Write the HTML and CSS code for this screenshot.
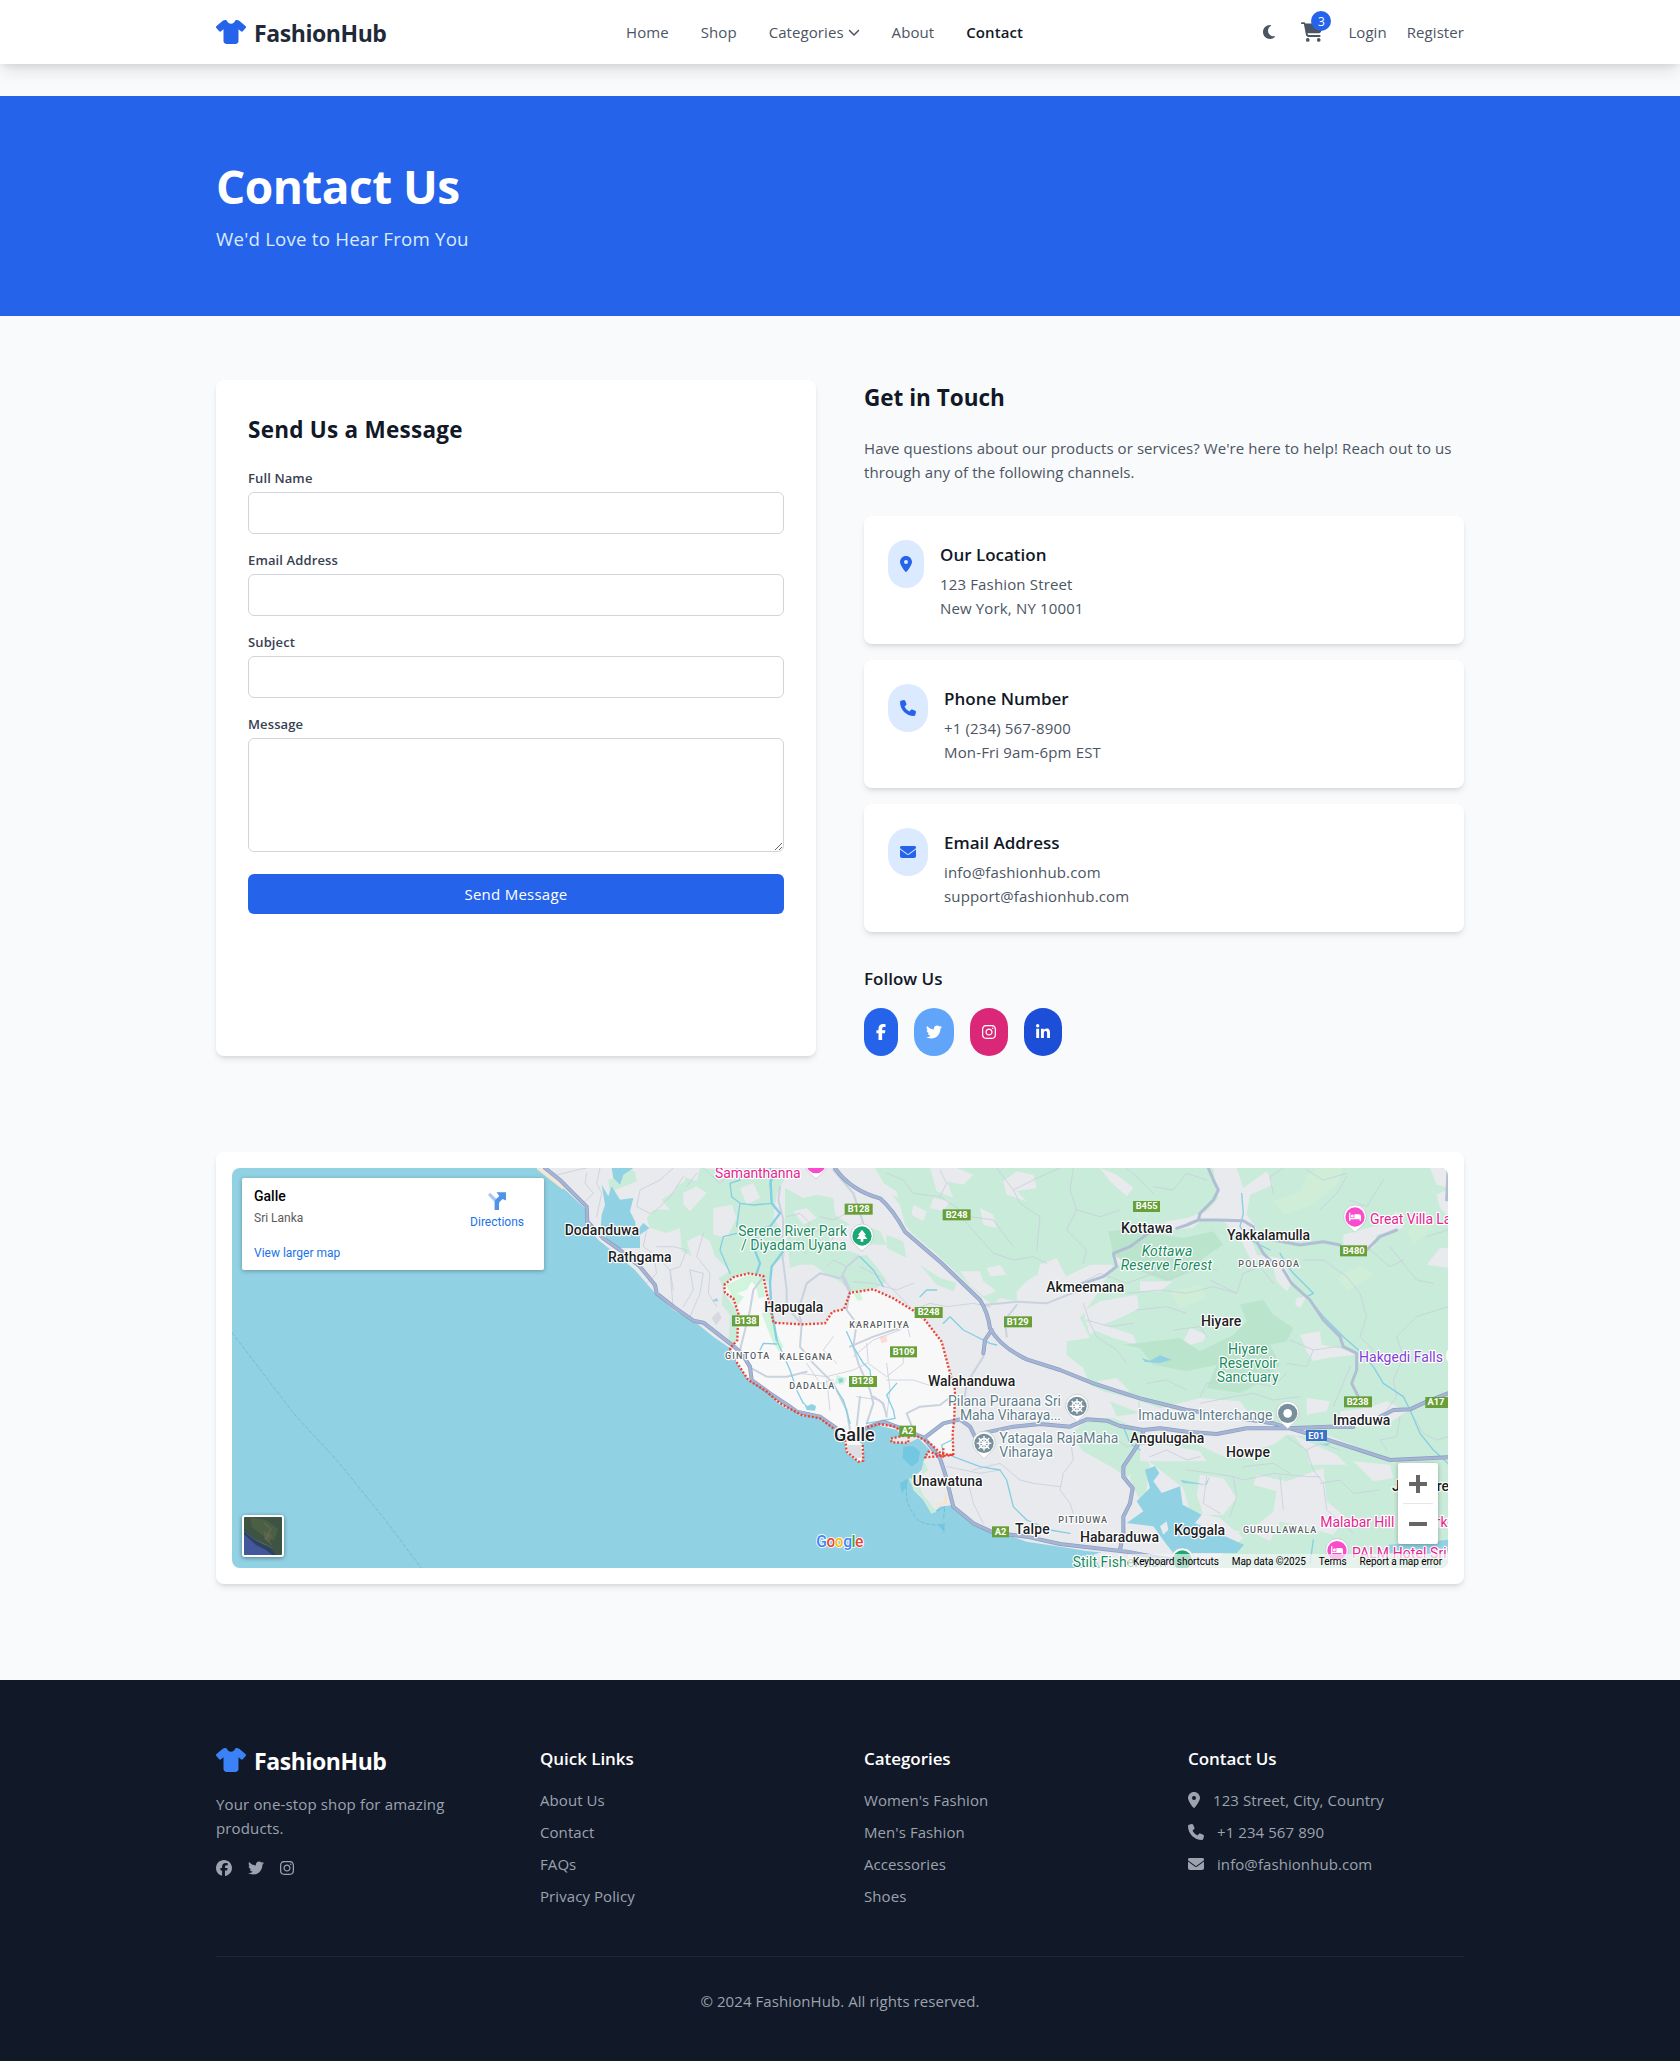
FILE: index.html
```html
<!DOCTYPE html>
<html lang="en">
<head>
<meta charset="utf-8">
<title>Contact Us - FashionHub</title>
<link rel="stylesheet" href="styles.css">
</head>
<body>
<svg class="sprite" aria-hidden="true">
  <symbol id="i-shirt" viewBox="0 0 640 512"><path d="M211.8 0c7.8 0 14.3 5.7 16.7 13.2C240.8 51.9 277.1 80 320 80s79.2-28.1 91.5-66.8C413.9 5.7 420.4 0 428.2 0h12.6c22.5 0 44.2 7.9 61.5 22.3L628.5 127.4c6.6 5.5 10.7 13.5 11.4 22.1s-2.1 17.1-7.8 23.6l-56 64c-11.4 13.1-31.2 14.6-44.6 3.5L480 197.7V448c0 35.3-28.7 64-64 64H224c-35.3 0-64-28.7-64-64V197.7l-51.5 42.9c-13.3 11.1-33.1 9.6-44.6-3.5l-56-64c-5.7-6.5-8.5-15-7.8-23.6s4.8-16.6 11.4-22.1L137.7 22.3C155 7.9 176.7 0 199.2 0h12.6z"/></symbol>
  <symbol id="i-moon" viewBox="0 0 384 512"><path d="M223.5 32C100 32 0 132.3 0 256S100 480 223.5 480c60.6 0 115.5-24.2 155.8-63.4c5-4.9 6.3-12.5 3.1-18.7s-10.1-9.7-17-8.5c-9.8 1.7-19.8 2.6-30.1 2.6c-96.9 0-175.5-78.8-175.5-176c0-65.8 36-123.1 89.3-153.3c6.1-3.5 9.2-10.5 7.7-17.3s-7.3-11.9-14.3-12.5c-6.3-.5-12.6-.8-19-.8z"/></symbol>
  <symbol id="i-cart" viewBox="0 0 576 512"><path d="M0 24C0 10.7 10.7 0 24 0H69.5c22 0 41.5 12.8 50.6 32h411c26.3 0 45.5 25 38.6 50.4l-41 152.3c-8.5 31.4-37 53.3-69.5 53.3H170.7l5.4 28.5c2.2 11.3 12.1 19.5 23.6 19.5H488c13.3 0 24 10.7 24 24s-10.7 24-24 24H199.7c-34.6 0-64.3-24.6-70.7-58.5L77.4 54.5c-.7-3.8-4-6.5-7.9-6.5H24C10.7 48 0 37.3 0 24zM128 464a48 48 0 1 1 96 0 48 48 0 1 1 -96 0zm336-48a48 48 0 1 1 0 96 48 48 0 1 1 0-96z"/></symbol>
  <symbol id="i-chevron" viewBox="0 0 512 512"><path d="M233.4 406.6c12.5 12.5 32.8 12.5 45.3 0l192-192c12.5-12.5 12.5-32.8 0-45.3s-32.8-12.5-45.3 0L256 338.7 86.6 169.4c-12.5-12.5-32.8-12.5-45.3 0s-12.5 32.8 0 45.3l192 192z"/></symbol>
  <symbol id="i-pin" viewBox="0 0 384 512"><path d="M215.7 499.2C267 435 384 279.4 384 192C384 86 298 0 192 0S0 86 0 192c0 87.4 117 243 168.3 307.2c12.3 15.3 35.1 15.3 47.4 0zM192 128a64 64 0 1 1 0 128 64 64 0 1 1 0-128z"/></symbol>
  <symbol id="i-phone" viewBox="0 0 512 512"><path d="M164.9 24.6c-7.7-18.6-28-28.5-47.4-23.2l-88 24C12.1 30.2 0 46 0 64C0 311.4 200.6 512 448 512c18 0 33.8-12.1 38.6-29.5l24-88c5.3-19.4-4.6-39.7-23.2-47.4l-96-40c-16.3-6.8-35.2-2.1-46.3 11.6L304.7 368C234.3 334.7 177.3 277.7 144 207.3L193.3 167c13.7-11.2 18.4-30 11.6-46.3l-40-96z"/></symbol>
  <symbol id="i-mail" viewBox="0 0 512 512"><path d="M48 64C21.5 64 0 85.5 0 112c0 15.1 7.1 29.3 19.2 38.4L236.8 313.6c11.4 8.5 27 8.5 38.4 0L492.8 150.4c12.1-9.1 19.2-23.3 19.2-38.4c0-26.5-21.5-48-48-48H48zM0 176V384c0 35.3 28.7 64 64 64H448c35.3 0 64-28.7 64-64V176L294.4 339.2c-22.8 17.1-54 17.1-76.8 0L0 176z"/></symbol>
  <symbol id="i-facebook-f" viewBox="0 0 320 512"><path d="M80 299.3V512H196V299.3h86.5l18-97.8H196V166.9c0-51.7 20.3-71.5 72.7-71.5c16.3 0 29.4 .4 37 1.2V7.9C291.4 4 256.4 0 236.2 0C129.3 0 80 50.5 80 159.4v42.1H14v97.8H80z"/></symbol>
  <symbol id="i-twitter" viewBox="0 0 512 512"><path d="M459.37 151.716c.325 4.548.325 9.097.325 13.645 0 138.72-105.583 298.558-298.558 298.558-59.452 0-114.68-17.219-161.137-47.106 8.447.974 16.568 1.299 25.34 1.299 49.055 0 94.213-16.568 130.274-44.832-46.132-.975-84.792-31.188-98.112-72.772 6.498.974 12.995 1.624 19.818 1.624 9.421 0 18.843-1.3 27.614-3.573-48.081-9.747-84.143-51.98-84.143-102.985v-1.299c13.969 7.797 30.214 12.67 47.431 13.319-28.264-18.843-46.781-51.005-46.781-87.391 0-19.492 5.197-37.36 14.294-52.954 51.655 63.675 129.3 105.258 216.365 109.807-1.624-7.797-2.599-15.918-2.599-24.04 0-57.828 46.782-104.934 104.934-104.934 30.213 0 57.502 12.67 76.67 33.137 23.715-4.548 46.456-13.32 66.599-25.34-7.798 24.366-24.366 44.833-46.132 57.827 21.117-2.273 41.584-8.122 60.426-16.243-14.292 20.791-32.161 39.308-52.628 54.253z"/></symbol>
  <symbol id="i-instagram" viewBox="0 0 448 512"><path d="M224.1 141c-63.6 0-114.9 51.3-114.9 114.9s51.3 114.9 114.9 114.9S339 319.5 339 255.9 287.7 141 224.1 141zm0 189.6c-41.1 0-74.7-33.5-74.7-74.7s33.5-74.7 74.7-74.7 74.7 33.5 74.7 74.7-33.6 74.7-74.7 74.7zm146.4-194.3c0 14.9-12 26.8-26.8 26.8-14.9 0-26.8-12-26.8-26.8s12-26.8 26.8-26.8 26.8 12 26.8 26.8zm76.1 27.2c-1.7-35.9-9.9-67.7-36.2-93.9-26.2-26.2-58-34.4-93.9-36.2-37-2.1-147.9-2.1-184.9 0-35.8 1.7-67.6 9.9-93.9 36.1s-34.4 58-36.2 93.9c-2.1 37-2.1 147.9 0 184.9 1.7 35.9 9.9 67.7 36.2 93.9s58 34.4 93.9 36.2c37 2.1 147.9 2.1 184.9 0 35.9-1.7 67.7-9.9 93.9-36.2 26.2-26.2 34.4-58 36.2-93.9 2.1-37 2.1-147.8 0-184.8zM398.8 388c-7.8 19.6-22.9 34.7-42.6 42.6-29.5 11.7-99.5 9-132.1 9s-102.7 2.6-132.1-9c-19.6-7.8-34.7-22.9-42.6-42.6-11.7-29.5-9-99.5-9-132.1s-2.6-102.7 9-132.1c7.8-19.6 22.9-34.7 42.6-42.6 29.5-11.7 99.5-9 132.1-9s102.7-2.6 132.1 9c19.6 7.8 34.7 22.9 42.6 42.6 11.7 29.5 9 99.5 9 132.1s2.7 102.7-9 132.1z"/></symbol>
  <symbol id="i-linkedin" viewBox="0 0 448 512"><path d="M100.28 448H7.4V148.9h92.88zM53.79 108.1C24.09 108.1 0 83.5 0 53.8a53.79 53.79 0 0 1 107.58 0c0 29.7-24.1 54.3-53.79 54.3zM447.9 448h-92.68V302.4c0-34.7-.7-79.2-48.29-79.2-48.29 0-55.69 37.7-55.69 76.7V448h-92.78V148.9h89.08v40.8h1.3c12.4-23.5 42.69-48.3 87.88-48.3 94 0 111.28 61.9 111.28 142.3V448z"/></symbol>
  <symbol id="i-facebook" viewBox="0 0 512 512"><path d="M512 256C512 114.6 397.4 0 256 0S0 114.6 0 256C0 376 82.7 476.8 194.2 504.5V334.2H141.4V256h52.8V222.3c0-87.1 39.4-127.5 125-127.5c16.2 0 44.2 3.2 55.7 6.4V172c-6-.6-16.5-1-29.6-1c-42 0-58.2 15.9-58.2 57.2V256h83.6l-14.4 78.2H287V510.1C413.8 494.8 512 386.9 512 256h0z"/></symbol>
</svg>

<nav class="navbar">
  <div class="container navbar-inner">
    <a class="logo" href="#"><svg class="logo-icon"><use href="#i-shirt"/></svg><span class="logo-text">FashionHub</span></a>
    <div class="nav-links">
      <a href="#">Home</a>
      <a href="#">Shop</a>
      <a class="nav-drop" href="#">Categories<svg class="chevron"><use href="#i-chevron"/></svg></a>
      <a href="#">About</a>
      <a class="active" href="#">Contact</a>
    </div>
    <div class="nav-actions">
      <svg class="moon"><use href="#i-moon"/></svg>
      <a class="cart" href="#"><svg class="cart-icon"><use href="#i-cart"/></svg><span class="badge">3</span></a>
      <a class="login" href="#">Login</a>
      <a class="register" href="#">Register</a>
    </div>
  </div>
</nav>

<header class="banner">
  <div class="container">
    <h1>Contact Us</h1>
    <p>We'd Love to Hear From You</p>
  </div>
</header>

<main class="container contact-grid">
  <section class="card form-card">
    <h2>Send Us a Message</h2>
    <form>
      <div class="field"><label for="name">Full Name</label><input id="name" type="text"></div>
      <div class="field"><label for="email">Email Address</label><input id="email" type="email"></div>
      <div class="field"><label for="subject">Subject</label><input id="subject" type="text"></div>
      <div class="field field-message"><label for="message">Message</label><textarea id="message"></textarea></div>
      <button type="button">Send Message</button>
    </form>
  </section>

  <section class="touch">
    <h2>Get in Touch</h2>
    <p class="intro">Have questions about our products or services? We're here to help! Reach out to us<br>through any of the following channels.</p>
    <div class="info-list">
      <div class="card info">
        <span class="info-icon"><svg class="w12"><use href="#i-pin"/></svg></span>
        <div><h3>Our Location</h3><p>123 Fashion Street</p><p>New York, NY 10001</p></div>
      </div>
      <div class="card info">
        <span class="info-icon"><svg class="w16"><use href="#i-phone"/></svg></span>
        <div><h3>Phone Number</h3><p>+1 (234) 567-8900</p><p>Mon-Fri 9am-6pm EST</p></div>
      </div>
      <div class="card info">
        <span class="info-icon"><svg class="w16"><use href="#i-mail"/></svg></span>
        <div><h3>Email Address</h3><p>info@fashionhub.com</p><p>support@fashionhub.com</p></div>
      </div>
    </div>
    <h3 class="follow">Follow Us</h3>
    <div class="socials">
      <a class="s-fb" href="#"><svg class="w10"><use href="#i-facebook-f"/></svg></a>
      <a class="s-tw" href="#"><svg class="w16"><use href="#i-twitter"/></svg></a>
      <a class="s-ig" href="#"><svg class="w14"><use href="#i-instagram"/></svg></a>
      <a class="s-li" href="#"><svg class="w14"><use href="#i-linkedin"/></svg></a>
    </div>
  </section>
</main>

<section class="container map-section">
  <div class="card map-card">
    <div class="map">
      <svg class="map-canvas" viewBox="-1164 54 3648 1200" preserveAspectRatio="none">
        <rect class="water" x="-1164" y="54" width="3648" height="1200"/>
        <!-- land -->
        <path class="land" d="M-250 54L-175 110L-105 175L-100 225L-65 270L-15 310L45 360L105 430L160 480L230 520L280 560L330 595L350 640L385 690L440 725L480 765L540 795L590 800L640 835L672 870L680 910L715 935L732 910L728 885L705 870L730 838L770 825L830 840L850 858L810 866L815 877L865 880L895 865L930 900L915 920L905 960L875 985L880 1020L910 1050L935 1092L960 1070L1000 1065L1040 1100L1095 1140L1160 1155L1220 1175L1320 1190L1400 1203L1520 1215L1600 1254H2484V54Z"/>

        <!-- west: lagoon side -->
        <g transform="translate(-240 54)">
          <path class="green" d="M250 0L285 10L290 40L240 60L210 75L205 35L240 25ZM415 0L420 30L405 70L365 95L390 125L340 125L320 150L330 180L380 195L420 180L425 250L455 265L440 220L480 200L510 220L525 265L570 310L535 330L545 350L555 380L595 435L600 470L590 520L565 530L570 440L545 410L550 350L600 320L665 320L690 350L700 290L735 265L720 180L700 150L710 80L740 20L720 0H640L560 10L480 0L470 40L440 30ZM735 60L790 90L830 80L880 90L885 140L930 170L860 190L880 250L830 240L760 200L735 170ZM740 200L830 230L900 240L960 260L990 300V365L930 370L900 340L860 320L820 290L780 290L750 300Z"/>
          <path class="land" d="M520 120L575 110L590 150L560 210L520 200ZM430 75L470 55L500 75L450 130L430 110ZM390 0H440L435 40L410 55L390 30ZM600 60L640 45L660 90L620 110ZM760 130L800 120L830 150L790 170Z"/>
          <path class="water" d="M215 0H280L250 20L240 50L220 30ZM185 50L205 85L215 55L240 95L280 90L270 130L285 160L290 190L310 165L328 180L300 200L300 240L230 240L200 215L190 190L180 210L185 140L195 110ZM515 400L530 390L535 400Z"/>
          <path class="building" d="M515 450L535 430L545 450L528 472Z"/>
        </g>

        <!-- centre: highway corridor -->
        <g transform="translate(690 54)">
          <path class="green" d="M0 270L50 260L90 310L110 340L80 360L0 370ZM110 200L160 220L170 270L110 240ZM40 170L90 190L110 230L60 230ZM210 290L270 330L320 345L310 370L260 350Z"/>
          <path class="green" d="M75 0L110 60L150 110L165 170L185 195L250 250L330 325L400 390L430 410L450 390L500 400L500 370L530 340L560 320L640 330L720 290L790 290L740 380L690 450L720 510L650 520L650 560L700 600L720 650L760 670L840 690L990 720V0Z"/>
          <path class="land" d="M460 40L500 10L550 20L560 60L500 70L530 100L470 80ZM240 0H320L370 20L340 50L290 40L310 90L260 70ZM750 0L800 20L850 60L830 85L780 40ZM860 130L920 150L930 200L870 180ZM330 310L390 310L400 340L440 370L400 385L360 350ZM250 90L300 100L280 130L240 120ZM390 120L430 140L440 180L400 170ZM20 0L70 0L75 30L140 70L145 90L90 60ZM410 300L450 290L470 320L420 325ZM570 290L620 270L650 330L560 330ZM190 110L230 130L220 160L185 140ZM700 450L760 470L850 500L860 530L790 510L740 490ZM740 640L800 630L840 670L780 660Z"/>
          <path class="land" d="M700 430L750 400L860 380L870 420L810 450L760 470L720 500ZM790 240L840 200L880 160L930 180L850 240L800 300Z"/>
          <path class="green" d="M700 765L740 750L790 750L880 790L880 880L830 930L790 900L700 850L660 800ZM860 840L900 890L890 960L880 1010L850 960L840 930ZM780 700L870 735L800 745Z"/>
        </g>

        <!-- east: hills -->
        <g transform="translate(1560 54)">
          <path class="green" d="M-5 0H930V882L770 885L560 800L450 770L250 740L-5 720Z"/>
          <path class="green" d="M130 810L260 870L400 830L440 800L560 810L760 885L930 880V1200H200L310 1110L240 1050L150 1030L130 960L40 890L0 860V830Z"/>
          <path class="land" d="M220 0H290L310 60L380 10L400 50L330 80L320 140L350 180L330 200L350 260L420 270L460 340L440 370L410 340L400 300L330 270L300 210L250 160L180 160L160 180L60 190L80 160L140 150L200 130L235 90ZM610 200L720 170L770 130L790 180L710 200L700 240L610 250ZM480 500L540 490L545 530L600 540L650 560L560 570L520 580L500 550ZM600 730L680 720L740 700L800 730L740 770L600 780ZM0 700L60 720L180 690L300 700L330 740L400 750L400 780L0 770ZM500 690L570 700L560 730L500 740ZM870 0H930V60L890 50ZM890 80L930 60V150L900 120ZM900 240H930V300L860 290ZM150 480L200 500L190 520L120 540L140 500ZM0 340L100 340L60 370L0 370ZM470 390L500 385L480 420L465 410Z"/>
          <path class="land" d="M180 920L250 930L290 990L250 1040L190 1040L170 980ZM350 920L440 940L550 900L560 1000L620 1050L580 1100L420 1060L390 1120L330 1090L400 1030L410 970L340 950ZM460 800L590 860L620 890L510 890L500 850ZM0 830L80 830L180 850L200 880L90 880L0 880ZM640 880L750 890L760 930L700 940ZM-140 1160L-20 1120L60 1150L120 1160L100 1200H-120ZM240 1080L300 1090L290 1115Z"/>
          <path class="forest" d="M-95 190L0 180L60 200L130 210L220 190L250 230L190 270L160 310L80 340L0 310L-80 260ZM300 410L370 395L400 440L460 480L440 520L390 530L420 590L370 640L300 675L200 660L230 590L140 610L40 590L0 540L-50 530L120 510L180 550L280 500L320 460Z"/>
          <path class="moss" d="M400 100L480 70L500 20L540 0H610L590 50L520 110L430 140ZM590 330L660 290L700 320L620 370ZM800 190L850 150L880 180L820 230ZM90 370L180 350L200 390L120 420Z"/>
          <path class="water" d="M15 905L45 895L58 915L40 940L65 975L120 955L128 1010L185 1040L165 1065L245 1100L312 1130L290 1155L100 1155L80 1130L40 1075L-40 1065L10 1030L-10 1000L30 960ZM120 935L200 950L210 925L195 950L130 945ZM5 570L30 578L60 562L95 575L60 585L15 582ZM540 828L572 825L560 835ZM745 1130L830 1125L930 1115V1150L840 1160L750 1155Z"/>
          <path class="land" d="M60 1075L80 1060L85 1085L70 1100ZM30 1080L50 1100L35 1110Z"/>
        </g>
        <path class="reef" d="M850 890L880 888L900 905L895 935L875 950L848 925ZM840 1000L865 985L860 1010L845 1030ZM955 1125L975 1118L972 1145Z"/>
        <path class="reef-line" d="M860 1010Q855 1060 880 1090Q890 1125 960 1125Q980 1140 970 1148M935 1092L975 1070L970 1110"/>
        <path class="sea-line" d="M-1164 548L-975 795L-850 930L-700 1115L-596 1254"/>
        <path class="sand" d="M-248 54L-170 115M975 1030L978 1058L945 1065"/>
        <path class="green" d="M865 985L882 1020L912 1050L935 1092L950 1085L930 1060L905 1030L895 990ZM910 930L925 960L905 975Z"/>

        <!-- town boundary -->
        <path class="town" d="M312 405L340 382L385 370L430 378L440 430L455 490L460 518L545 523L615 520L637 485L672 478L690 428L760 418L820 445L885 485L915 510L965 575L985 650L1005 720L1003 800L998 850L1000 915L965 912L930 880L895 860L850 838L820 825L775 822L735 838L705 865L728 885L730 932L715 935L680 905L676 870L640 835L600 805L545 795L480 760L440 725L385 690L352 640L330 595L352 570L355 490L340 445L315 428Z"/>
        <path class="park" d="M318 405L385 375L428 380L435 440L415 445L408 410L395 395L380 420L350 430L372 440L350 470L340 445ZM425 490L450 480L468 545L490 590L478 606L460 580L440 530ZM700 430L720 425L728 450L712 452ZM650 675L680 685L670 705L645 700Z"/>
        <path class="water" d="M550 755L562 768L575 762L588 768L585 782L560 780ZM654 686L668 684L670 695L658 700Z"/>
        <path class="hospital" d="M778 560L800 558L802 575L785 580Z"/>

        <!-- minor roads -->
        <path class="lane" d="M-190 75L-130 60L-100 54M-100 70L-105 100L-80 130L-110 160M-60 54L-70 100L-55 130L-70 200M80 240L70 290L100 310L110 370L80 400M110 290L160 290L200 300L180 350L150 360L160 420M60 330L110 320L150 360M150 360L160 480M210 360L220 420L190 470M210 360L250 370L240 430L210 500M250 250L230 320L270 370L265 430L290 470M160 54L120 90L60 120L50 170L90 190M250 54L300 100L320 80M230 70L200 110M100 190L150 140L190 80M500 200L540 190L570 220L550 250L600 240L640 260L620 300M540 260L520 290L560 310M600 200L640 210L700 180M620 350L640 330L680 350M700 395L760 400L830 420L880 400M720 350L780 380L870 470M800 70L850 90L880 130L960 140L1020 180L1040 220L1120 310L1180 330L1240 320L1280 340M960 60L980 100L960 140M1130 54L1180 120L1260 80L1320 54M1180 120L1200 160L1260 200L1250 300M1360 54L1350 120L1370 180L1340 240L1400 300L1390 340M1370 180L1440 200L1500 180M1050 200L1120 210L1180 290M880 480L930 460L980 470L1060 460L1110 470M1600 110L1660 120L1700 70L1760 90M1600 130L1560 90L1520 54M1960 130L1950 80L1990 54M2100 180L2150 130L2180 80M2190 150L2240 170L2290 90M2050 330L2110 330L2180 380L2220 430L2240 500L2220 560L2260 600M1960 400L1920 350L1870 370L1850 430L1770 390M1380 400L1440 370L1520 400L1600 370L1650 390L1720 350L1790 360M1520 430L1620 420L1700 430L1780 410L1850 430M1550 480L1640 470L1700 490M1390 460L1410 520L1430 560L1490 600L1520 640M1400 510L1470 530L1540 520M1660 540L1740 530L1760 560M2010 570L2080 600L2150 590L2200 600M2080 600L2060 650L2000 640M1580 700L1640 690L1700 720M1740 760L1840 740L1900 730L1960 750L2040 740M1740 740L1760 700L1860 690L1960 710L2000 670M2140 770L2190 650M2340 800L2330 860L2280 870L2300 900M2380 800L2410 850L2450 870L2484 860"/>
        <path class="lane" d="M1060 960L1140 940L1200 990L1240 1000L1320 1010M1350 860L1360 930L1330 970L1320 1020L1350 1060L1360 1090M980 950L1080 970L1140 960M1040 980L1060 1060L1090 1120M1590 920L1640 900L1700 930L1740 920M1700 960L1780 970L1840 980L1870 990L1960 970L2060 980L2100 980M1760 980L1750 1060L1800 1090M1840 980L1850 1040L1830 1100M1980 980L1990 1080M2000 860L2060 900L2100 880L2160 900M2060 900L2080 960L2110 1000L2120 1080L2200 1150M2100 1000L2160 990L2200 1030L2280 1020M1870 950L1960 940L2010 970M1480 860L1520 890L1600 880M2300 780L2330 740L2320 690L2350 620M2350 620L2330 560L2390 500L2484 470M2250 300L2310 350L2350 330M2310 290L2390 390L2440 400M2484 240L2420 260M2060 60L2110 90L2180 70M640 560L610 600L650 640M870 560L860 520M700 620L760 570L840 540M740 580L745 640L800 680L850 640L850 590M800 690L880 690L940 710L1000 700M800 640L810 720L800 800M540 670L620 680L700 660L740 640M560 640L600 700L640 690M620 690L630 780M710 740L780 750L800 790"/>
        <path class="street" d="M545 523L540 590L580 640L640 700L680 780L690 840M480 110L475 150L490 210L485 300L500 420L500 470L545 523M672 380L690 420L680 480L710 520L700 590L715 640L750 720L760 760L740 820M715 320L680 350L665 380L690 430M385 650L440 680L500 680L560 665M430 380L400 420L390 480L360 600M640 60L700 130L730 220M690 590L760 560L820 540L860 530M860 790L900 770L960 765L1000 735M860 790L880 840M760 740L790 760L800 800M720 740L710 830M1030 770L1040 700L1090 620L1100 560M1090 465L1190 455L1280 460L1380 420M1160 560L1155 510L1190 465M545 523L535 480L560 400L600 370L660 385"/>
        <path class="rivers" d="M350 54L360 90L330 100L335 140L360 160L350 230M360 160L400 165L455 160L450 100L480 54M350 250L310 260L300 300L330 370M420 600L430 580L470 582M640 705L670 750L690 820M680 545L700 590L730 640L750 660L755 700M830 700L800 735L820 780L825 805L740 820M970 520L990 500L1030 540L1110 580L1130 585M900 440L920 420L950 420M720 320L760 360L790 410M1000 920L1080 950L1140 960L1160 990L1180 1070L1220 1110L1290 1140L1350 1150M970 912L965 885L995 870M470 570L510 660L530 720L550 760M1865 130L1870 190L1860 230L1890 270L1950 300M1980 310L2000 345L2020 370L2080 430L2060 440L2110 500L2170 560L2215 600L2260 650L2290 700L2350 740L2370 780L2400 850L2440 900L2484 940M1510 830L1530 880L1560 900M2070 1240L2080 1170"/>
        <path class="river" d="M450 54L455 160L480 190L450 230L415 240L400 290L420 340L410 370M500 290L455 350L450 400L455 480L470 570"/>
        <!-- main roads -->
        <path class="route" d="M1765 54L1780 90L1795 120L1780 150L1740 190L1735 210L1790 210L1870 212L1900 230L1905 265M1735 210L1700 225L1670 235M1585 250L1530 290L1480 310L1490 350L1450 380L1390 400M1890 240L1930 310L1960 340M1990 360L2015 400L2070 450L2110 510L2160 560L2170 590L2210 610L2210 660L2195 700L2215 740M1960 270L2040 285L2110 275L2160 285M2240 300L2280 260L2330 240M2484 60L2480 150"/>
        <path class="highway-edge" d="M645 54Q690 120 780 145Q820 180 855 245L960 335L1080 450Q1105 490 1110 535Q1140 590 1220 628L1320 660L1420 700L1560 745L1700 780L1960 820L2110 865L2310 930L2484 922M-225 54L-180 90L-140 130L-100 170L-98 215L-50 265L0 300L60 350L105 405L110 430L160 470L220 512L250 518L330 580L365 610L390 650L395 690L450 730L510 770L530 785L600 800L650 835M735 835L790 815L830 830L910 862L960 925L975 970L1000 1070L1060 1120L1120 1148L1220 1160L1320 1182L1520 1205L1600 1220L1720 1240M915 862L970 820L1020 808L1050 830L1065 860M1085 850L1180 830L1260 822L1350 830L1400 808L1460 812L1500 828L1570 840L1620 835L1700 845L1790 852L1880 835L2000 835L2130 830L2200 830M1570 845L1550 890L1510 950L1510 980L1538 1015L1530 1060L1510 1100L1510 1150L1500 1200M2280 800L2320 780L2370 778L2420 755L2484 730M1115 540L1095 570L1090 610"/>
        <path class="highway" d="M645 54Q690 120 780 145Q820 180 855 245L960 335L1080 450Q1105 490 1110 535Q1140 590 1220 628L1320 660L1420 700L1560 745L1700 780L1960 820L2110 865L2310 930L2484 922M-225 54L-180 90L-140 130L-100 170L-98 215L-50 265L0 300L60 350L105 405L110 430L160 470L220 512L250 518L330 580L365 610L390 650L395 690L450 730L510 770L530 785L600 800L650 835M735 835L790 815L830 830L910 862L960 925L975 970L1000 1070L1060 1120L1120 1148L1220 1160L1320 1182L1520 1205L1600 1220L1720 1240M915 862L970 820L1020 808L1050 830L1065 860M1085 850L1180 830L1260 822L1350 830L1400 808L1460 812L1500 828L1570 840L1620 835L1700 845L1790 852L1880 835L2000 835L2130 830L2200 830M1570 845L1550 890L1510 950L1510 980L1538 1015L1530 1060L1510 1100L1510 1150L1500 1200M2280 800L2320 780L2370 778L2420 755L2484 730M1115 540L1095 570L1090 610"/>
        <path class="fort" d="M682 885L722 885L728 925L700 925L684 905Z"/>
        <path class="town-line" d="M312 405L340 382L385 370L430 378L440 430L455 490L460 518L545 523L615 520L637 485L672 478L690 428L760 418L820 445L885 485L915 510L965 575L985 650L1005 720L1003 800L998 850L1000 915L965 912L930 880L895 860L860 855L812 866L815 877L865 878L866 856L820 828L775 822L735 834M728 885L730 932L715 935L680 905L676 870M640 835L600 805L545 795L480 760L440 725L385 690L352 640L330 595L352 570L355 490L340 445L315 428L312 405M1000 915L915 922L925 905L950 912L970 920L970 895"/>

        <!-- road shields -->
        <g class="shield">
          <rect x="674" y="161" width="84" height="33"/><rect x="968" y="178" width="84" height="33"/><rect x="336" y="496" width="81" height="33"/><rect x="884" y="471" width="84" height="33"/><rect x="1152" y="499" width="84" height="33"/><rect x="810" y="589" width="81" height="33"/><rect x="687" y="678" width="84" height="33"/><rect x="838" y="827" width="50" height="33"/><rect x="1116" y="1129" width="51" height="33"/><rect x="1539" y="153" width="81" height="33"/><rect x="2160" y="286" width="81" height="33"/><rect x="2172" y="739" width="84" height="33"/><rect x="2416" y="741" width="72" height="33"/><rect class="blue" x="2058" y="840" width="63" height="33"/>
        </g>
        <g class="shield-text">
          <text x="716" y="187">B128</text><text x="1010" y="204">B248</text><text x="377" y="522">B138</text><text x="926" y="496">B248</text><text x="1193" y="525">B129</text><text x="851" y="615">B109</text><text x="728" y="703">B128</text><text x="863" y="853">A2</text><text x="1142" y="1155">A2</text><text x="1580" y="178">B455</text><text x="2201" y="312">B480</text><text x="2213" y="765">B238</text><text x="2448" y="766">A17</text><text x="2089" y="867">E01</text>
        </g>

        <!-- markers -->
        <g transform="translate(588 41)"><path class="marker-edge" d="M0 46C-8 36 -34 22 -34 -2A34 34 0 1 1 34 -2C34 22 8 36 0 46Z"/><circle class="m-pink" r="29"/></g>
        <g transform="translate(726 258)"><path class="marker-edge" d="M0 46C-8 36 -34 22 -34 -2A34 34 0 1 1 34 -2C34 22 8 36 0 46Z"/><circle class="m-green" r="29"/><path class="m-white" d="M0 -19L12 -3H7L16 9H4V17H-4V9H-16L-7 -3H-12Z"/></g>
        <g transform="translate(1092 880)"><path class="marker-edge" d="M0 46C-8 36 -34 22 -34 -2A34 34 0 1 1 34 -2C34 22 8 36 0 46Z"/><circle class="m-slate" r="29"/><circle class="m-wheel" r="14"/><path class="m-spokes" d="M0 -22V22M-22 0H22M-16 -16L16 16M-16 16L16 -16"/></g>
        <g transform="translate(1371 769)"><path class="marker-edge" d="M0 46C-8 36 -34 22 -34 -2A34 34 0 1 1 34 -2C34 22 8 36 0 46Z"/><circle class="m-slate" r="29"/><circle class="m-wheel" r="14"/><path class="m-spokes" d="M0 -22V22M-22 0H22M-16 -16L16 16M-16 16L16 -16"/></g>
        <g transform="translate(2003 790)"><path class="marker-edge" d="M0 46C-8 36 -34 22 -34 -2A34 34 0 1 1 34 -2C34 22 8 36 0 46Z"/><circle class="m-slate" r="29"/><circle class="m-white" r="13"/></g>
        <g transform="translate(2205 201)"><path class="marker-edge" d="M0 46C-8 36 -34 22 -34 -2A34 34 0 1 1 34 -2C34 22 8 36 0 46Z"/><circle class="m-pink" r="29"/><path class="m-white" d="M-18 -13H-14V3H-2V-8H12Q18 -8 18 -2V12H14V7H-14V12H-18Z"/><circle class="m-white" cx="-8" cy="-3" r="4.5"/></g>
        <g transform="translate(2151 1202)"><path class="marker-edge" d="M0 46C-8 36 -34 22 -34 -2A34 34 0 1 1 34 -2C34 22 8 36 0 46Z"/><circle class="m-pink" r="29"/><path class="m-white" d="M-18 -13H-14V3H-2V-8H12Q18 -8 18 -2V12H14V7H-14V12H-18Z"/><circle class="m-white" cx="-8" cy="-3" r="4.5"/></g>
        <g transform="translate(1687 1230)"><path class="marker-edge" d="M0 46C-8 36 -34 22 -34 -2A34 34 0 1 1 34 -2C34 22 8 36 0 46Z"/><circle class="m-green" r="29"/></g>
        <circle class="m-white" cx="2510" cy="617" r="32"/>

        <!-- place names -->
        <g class="place">
          <text x="-166" y="255" textLength="223">Dodanduwa</text>
          <text x="-36" y="337" textLength="191">Rathgama</text>
          <text x="433" y="486" textLength="177">Hapugala</text>
          <text x="924" y="708" textLength="262">Walahanduwa</text>
          <text x="878" y="1008" textLength="210">Unawatuna</text>
          <text x="1185" y="1152" textLength="104">Talpe</text>
          <text x="1279" y="426" textLength="234">Akmeemana</text>
          <text x="1503" y="249" textLength="155">Kottawa</text>
          <text x="1821" y="270" textLength="249">Yakkalamulla</text>
          <text x="1743" y="528" textLength="121">Hiyare</text>
          <text x="2139" y="825" textLength="172">Imaduwa</text>
          <text x="1530" y="879" textLength="223">Angulugaha</text>
          <text x="1818" y="921" textLength="132">Howpe</text>
          <text x="1380" y="1176" textLength="237">Habaraduwa</text>
          <text x="1662" y="1155" textLength="153">Koggala</text>
          <text x="2316" y="1024">J</text>
          <text x="2450" y="1024">re</text>
          <text class="city" x="642" y="874" textLength="122">Galle</text>
        </g>
        <g class="suburb">
          <text x="688" y="534" textLength="178">KARAPITIYA</text>
          <text x="315" y="628" textLength="133">GINTOTA</text>
          <text x="478" y="630" textLength="158">KALEGANA</text>
          <text x="508" y="717" textLength="135">DADALLA</text>
          <text x="1855" y="351" textLength="182">POLPAGODA</text>
          <text x="1315" y="1119" textLength="146">PITIDUWA</text>
          <text x="1869" y="1149" textLength="220">GURULLAWALA</text>
        </g>
        <g class="poi t-green">
          <text x="355" y="258" textLength="326">Serene River Park</text>
          <text x="363" y="300" textLength="317">/ Diyadam Uyana</text>
          <text class="italic" x="1565" y="317" textLength="152">Kottawa</text>
          <text class="italic" x="1502" y="360" textLength="274">Reserve Forest</text>
          <text x="1824" y="612" textLength="119">Hiyare</text>
          <text x="1797" y="654" textLength="175">Reservoir</text>
          <text x="1790" y="696" textLength="186">Sanctuary</text>
          <text x="1358" y="1250" textLength="282">Stilt Fisherman</text>
        </g>
        <g class="poi t-slate">
          <text x="984" y="768" textLength="339">Pilana Puraana Sri</text>
          <text x="1020" y="810" textLength="303">Maha Viharaya...</text>
          <text x="1138" y="879" textLength="357">Yatagala RajaMaha</text>
          <text x="1138" y="921" textLength="161">Viharaya</text>
          <text x="1554" y="811" textLength="403">Imaduwa Interchange</text>
        </g>
        <g class="poi t-pink">
          <text x="285" y="84" textLength="257">Samanthanna</text>
          <text x="2250" y="222" textLength="244">Great Villa La</text>
          <text x="2101" y="1131" textLength="222">Malabar Hill</text>
          <text x="2445" y="1131" textLength="38">nk</text>
          <text x="2196" y="1224" textLength="284">PALM Hotel Sri</text>
        </g>
        <g class="poi t-purple"><text x="2217" y="636" textLength="252">Hakgedi Falls</text></g>
        <text class="google" x="589" y="1190" textLength="141"><tspan class="g-b">G</tspan><tspan class="g-r">o</tspan><tspan class="g-y">o</tspan><tspan class="g-b">g</tspan><tspan class="g-g">l</tspan><tspan class="g-r">e</tspan></text>
      </svg>

      <div class="place-card">
        <div class="place-info">
          <strong>Galle</strong>
          <span>Sri Lanka</span>
          <a href="#">View larger map</a>
        </div>
        <a class="directions" href="#">
          <svg viewBox="0 0 18 18"><path class="dir-light" d="M2.2 .8L9 7.6L6.6 10L0 3.1Z"/><path class="dir-dark" d="M6.6 18V10.5Q6.6 8.5 8 7L11.3 4L8.5 .2H18V8.4L14.6 7L12 9.6Q11 10.6 11 12V18Z"/></svg>
          Directions
        </a>
      </div>
      <svg class="thumb" viewBox="0 0 38 38">
        <rect width="38" height="38" fill="#3d5443"/>
        <path fill="#4b5f45" d="M6 0L22 3L34 12L30 24L18 18L8 10Z"/>
        <path fill="#6a6350" d="M20 14L28 18L26 25L20 22Z" opacity=".6"/>
        <path fill="#43579a" d="M0 14L8 22L16 28L24 32L30 38H0Z"/>
        <path fill="#2c4263" d="M0 12L8 20L18 27L26 30L32 38H28L22 33L12 28L0 17Z"/>
        <path stroke="#8a9280" fill="none" stroke-width=".5" opacity=".7" d="M0 14L10 22L20 27L28 31M20 6L27 12L22 22L28 28"/>
      </svg>
      <div class="zoom"><span class="plus"></span><span class="minus"></span></div>
      <div class="credits"><span>Keyboard shortcuts</span><span>Map data ©2025</span><span>Terms</span><span>Report a map error</span></div>
    </div>
  </div>
</section>

<footer class="footer">
  <div class="container">
    <div class="footer-grid">
      <div>
        <a class="logo" href="#"><svg class="logo-icon"><use href="#i-shirt"/></svg><span class="logo-text">FashionHub</span></a>
        <p class="tagline">Your one-stop shop for amazing<br>products.</p>
        <div class="footer-social"><svg class="w16"><use href="#i-facebook"/></svg><svg class="w16"><use href="#i-twitter"/></svg><svg class="w14"><use href="#i-instagram"/></svg></div>
      </div>
      <div>
        <h4>Quick Links</h4>
        <ul><li>About Us</li><li>Contact</li><li>FAQs</li><li>Privacy Policy</li></ul>
      </div>
      <div>
        <h4>Categories</h4>
        <ul><li>Women's Fashion</li><li>Men's Fashion</li><li>Accessories</li><li>Shoes</li></ul>
      </div>
      <div>
        <h4>Contact Us</h4>
        <ul class="footer-contact">
          <li><svg class="w12"><use href="#i-pin"/></svg>123 Street, City, Country</li>
          <li><svg class="w16"><use href="#i-phone"/></svg>+1 234 567 890</li>
          <li><svg class="w16"><use href="#i-mail"/></svg>info@fashionhub.com</li>
        </ul>
      </div>
    </div>
    <p class="copyright">© 2024 FashionHub. All rights reserved.</p>
  </div>
</footer>
</body>
</html>
```
FILE: styles.css
```css
* { box-sizing: border-box; margin: 0; padding: 0; }
body {
  font: 15px/24px "Open Sans", "Noto Sans", sans-serif;
  letter-spacing: .075px;
  color: #111827;
  background: #f9fafb;
}
a { color: inherit; text-decoration: none; }
ul { list-style: none; }
svg { display: block; fill: currentColor; flex: none; }
.sprite { position: absolute; width: 0; height: 0; }
.container { width: 1280px; margin: 0 auto; padding: 0 16px; }
.w10 { width: 10px; height: 16px; }
.w12 { width: 12px; height: 16px; }
.w14 { width: 14px; height: 16px; }
.w16 { width: 16px; height: 16px; }

/* navigation */
.navbar {
  height: 64px;
  background: #fff;
  box-shadow: 0 10px 15px -3px rgba(0, 0, 0, .1), 0 4px 6px -2px rgba(0, 0, 0, .08);
  margin-bottom: 32px;
}
.navbar-inner { display: grid; grid-template-columns: 410px 1fr auto; align-items: center; height: 64px; }
.logo { display: flex; align-items: center; gap: 8px; height: 32px; }
.logo-icon { width: 30px; height: 24px; color: #2563eb; }
.logo-text { font-size: 23px; font-weight: 700; line-height: 32px; padding-top: 2px; color: #1f2937; letter-spacing: -.42px; }
.nav-links { display: flex; gap: 32px; color: #4b5563; }
.nav-drop { display: flex; align-items: center; gap: 4px; }
.chevron { width: 12px; height: 12px; }
.nav-links .active { color: #111827; font-weight: 600; letter-spacing: .1px; }
.nav-actions { display: flex; align-items: center; color: #4b5563; }
.moon { width: 14px; height: 16px; margin-right: 25px; }
.cart { position: relative; margin-right: 25px; }
.cart-icon { width: 22px; height: 20px; }
.badge {
  position: absolute; left: 10px; top: -11px;
  width: 20px; height: 20px; border-radius: 50%;
  background: #2563eb; color: #fff; font-size: 12px; line-height: 21px; text-align: center;
}
.login { margin-right: 20px; }

/* banner */
.banner { background: #2563eb; height: 220px; padding: 66px 0 62px; color: #fff; }
.banner h1 { font-size: 46px; line-height: 48px; margin-bottom: 15px; letter-spacing: -.55px; }
.banner p { font-size: 18.7px; line-height: 28px; letter-spacing: .2px; color: #dbeafe; }

/* contact */
.contact-grid { display: grid; grid-template-columns: 1fr 1fr; gap: 48px; padding-top: 64px; }
.card { background: #fff; border-radius: 8px; box-shadow: 0 4px 6px -1px rgba(0, 0, 0, .1), 0 2px 4px -2px rgba(0, 0, 0, .1); }
h2 { font-size: 22.5px; line-height: 32px; padding-top: 2px; margin-bottom: 22px; letter-spacing: .1px; }
.form-card h2 { letter-spacing: .25px; }
.touch h2 { letter-spacing: 0; }
.form-card { padding: 32px; }
.field { margin-bottom: 16px; }
.field-message { margin-bottom: 22px; }
label { display: block; font-size: 13px; font-weight: 600; line-height: 20px; margin-bottom: 4px; color: #374151; letter-spacing: .12px; }
input, textarea { display: block; width: 100%; border: 1px solid #d1d5db; border-radius: 6px; background: #fff; font: inherit; padding: 8px 16px; }
input { height: 42px; }
textarea { height: 114px; }
button { display: block; width: 100%; height: 40px; border: 0; border-radius: 6px; background: #2563eb; color: #fff; font: inherit; letter-spacing: .25px; }
.intro { color: #4b5563; margin-bottom: 32px; }
.info-list { display: grid; gap: 16px; margin-bottom: 32px; }
.info { display: flex; align-items: flex-start; gap: 16px; padding: 24px; height: 128px; color: #4b5563; }
.info p { letter-spacing: .15px; }
.info-icon { padding: 16px 12px; border-radius: 24px; background: #dbeafe; color: #2563eb; }
h3 { font-size: 17px; font-weight: 600; line-height: 28px; padding-top: 1px; margin-bottom: 3px; color: #111827; letter-spacing: 0; }
.follow { margin-bottom: 15px; }
.socials { display: flex; gap: 16px; color: #fff; }
.socials a { padding: 16px 12px; border-radius: 24px; }
.s-fb { background: #2563eb; }
.s-tw { background: #60a5fa; }
.s-ig { background: #db2777; }
.s-li { background: #1d4ed8; }

/* map */
.map-section { padding-top: 96px; padding-bottom: 96px; }
.map-card { padding: 16px; }
.map { position: relative; height: 400px; border-radius: 8px; overflow: hidden; font-family: Roboto, sans-serif; letter-spacing: 0; }
.map-canvas { width: 1216px; height: 400px; }
.water { fill: #90d1e3; }
.land { fill: #e8eaed; }
.green { fill: #c9ebd9; }
.park { fill: #d0f5dc; }
.forest { fill: #bbe4cd; }
.moss { fill: #d0edd8; }
.building { fill: #d6d9e0; }
.town { fill: #f8f8f8; }
.hospital { fill: #fbdcd9; }
.fort { fill: #dcdfe4; }
.reef { fill: #74c7e0; }
.reef-line, .sea-line { fill: none; stroke: #6cc1d9; stroke-width: 3; stroke-dasharray: 12 5; }
.sand { fill: none; stroke: #f5e5cd; stroke-width: 8; }
.lane, .street, .rivers, .river, .route, .highway, .highway-edge, .town-line { fill: none; stroke-linejoin: round; stroke-linecap: round; }
.lane { stroke: #c9d0dd; stroke-width: 3; opacity: .85; }
.street { stroke: #c9d2de; stroke-width: 6; }
.rivers { stroke: #85cfe3; stroke-width: 4; }
.river { stroke: #85cfe3; stroke-width: 7; }
.route { stroke: #b1bfd4; stroke-width: 9; }
.highway-edge { stroke: #8a9dc2; stroke-width: 12; }
.highway { stroke: #a5b5d3; stroke-width: 8; }
.town-line { stroke: #ea4335; stroke-width: 7; stroke-dasharray: 6 5.5; stroke-linecap: butt; }
.shield { fill: #689f38; }
.shield .blue { fill: #3b72c8; }
.shield-text { fill: #fff; font-size: 28px; font-weight: 700; text-anchor: middle; }
.marker-edge { fill: #fff; stroke: #b9bfc6; stroke-width: 2; }
.m-pink { fill: #f94ccd; }
.m-green { fill: #1aa874; }
.m-slate { fill: #78909c; }
.m-white { fill: #fff; }
.m-wheel { fill: none; stroke: #fff; stroke-width: 5; }
.m-spokes { fill: none; stroke: #fff; stroke-width: 4; }
.place, .suburb, .poi { stroke: #fff; stroke-width: 7; paint-order: stroke; stroke-linejoin: round; }
.place { fill: #202124; font-size: 42px; font-weight: 500; }
.place .city { font-size: 54px; }
.suburb { fill: #5a5f66; font-size: 27px; font-weight: 500; }
.poi { font-size: 42px; }
.italic { font-style: italic; }
.t-green { fill: #188a5e; }
.t-slate { fill: #607d8b; }
.t-pink { fill: #e52592; }
.t-purple { fill: #8440d6; }
.google { font-size: 47px; font-weight: 500; stroke: #fff; stroke-width: 5; paint-order: stroke; }
.g-b { fill: #4285f4; }
.g-r { fill: #ea4335; }
.g-y { fill: #fbbc05; }
.g-g { fill: #34a853; }
.place-card {
  position: absolute; left: 10px; top: 10px; width: 302px; height: 92px;
  display: flex; justify-content: space-between; padding: 9px 20px 0 12px;
  background: #fff; border-radius: 2px; box-shadow: 0 1px 4px rgba(0, 0, 0, .3);
  font-size: 12px; line-height: 16px;
}
.place-info { display: flex; flex-direction: column; align-items: flex-start; }
.place-info strong { font-size: 14px; font-weight: 500; line-height: 18px; color: #000; margin-bottom: 5px; }
.place-info span { color: #5b5b5b; margin-bottom: 19px; }
.place-card a { color: #1a73e8; }
.directions { display: flex; flex-direction: column; align-items: center; padding-top: 5px; gap: 4px; }
.directions svg { width: 18px; height: 18px; }
.dir-light { fill: #a8c7f5; }
.dir-dark { fill: #5094ea; }
.thumb { position: absolute; left: 10px; bottom: 11px; width: 42px; height: 42px; border: 2px solid #fff; border-radius: 3px; box-shadow: 0 1px 4px rgba(0, 0, 0, .4); }
.zoom { position: absolute; right: 10px; top: 295px; width: 40px; height: 81px; background: #fff; box-shadow: 0 1px 4px rgba(0, 0, 0, .3); border-radius: 2px; display: grid; grid-template-rows: 41px 40px; }
.zoom span { display: block; background: linear-gradient(#666, #666) center / 18px 4px no-repeat; }
.zoom .plus { background: linear-gradient(#666, #666) center / 18px 4px no-repeat, linear-gradient(#666, #666) center / 4px 18px no-repeat, linear-gradient(#e6e6e6, #e6e6e6) bottom / 30px 1px no-repeat; }
.credits { position: absolute; right: 0; bottom: 0; height: 14px; display: flex; gap: 13px; padding: 0 6px 0 5px; font-size: 10px; line-height: 15px; color: #000; background: rgba(245, 245, 245, .7); letter-spacing: -.06px; white-space: nowrap; }

/* footer */
.footer { background: #111827; height: 381px; padding-top: 64px; color: #9ca3af; }
.footer-grid { display: grid; grid-template-columns: repeat(4, 1fr); gap: 48px; height: 164px; }
.footer .logo-icon { color: #3b82f6; }
.footer .logo-text { color: #fff; }
.tagline { margin: 16px 0; letter-spacing: .15px; }
.footer-social { display: flex; align-items: center; gap: 16px; height: 24px; }
h4 { font-size: 17px; font-weight: 600; line-height: 28px; padding-top: 1px; margin-bottom: 15px; color: #fff; letter-spacing: -.05px; }
li { margin-bottom: 8px; }
.footer-contact li { display: flex; align-items: center; gap: 13px; }
.copyright { margin-top: 48px; border-top: 1px solid #1f2937; padding-top: 32px; text-align: center; }
```
